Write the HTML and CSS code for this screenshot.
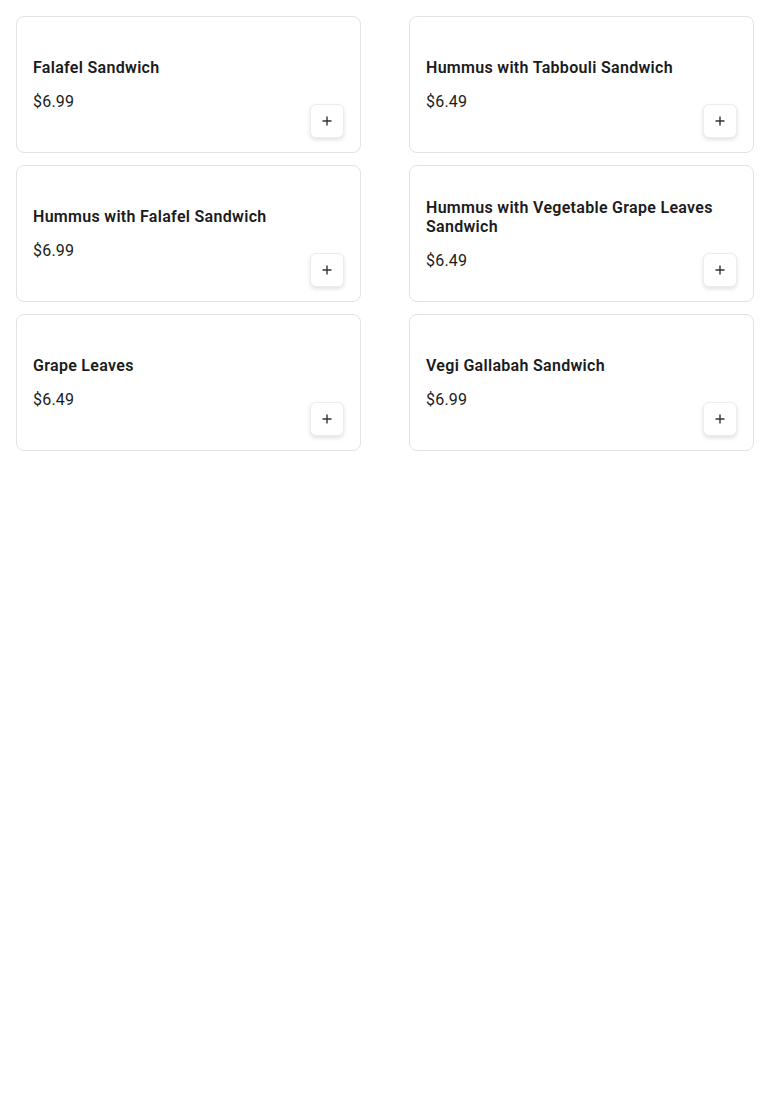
FILE: index.html
```html
<!DOCTYPE html>
<html>
<head>
<meta charset="utf-8">
<link rel="stylesheet" href="styles.css">
</head>
<body>
<div class="grid">
  <div class="card">
    <div class="info"><div class="title">Falafel Sandwich</div><div class="price">$6.99</div></div>
    <button class="add"><svg width="12" height="12" viewBox="0 0 12 12"><path d="M6 1.5v9M1.5 6h9" stroke="#333" stroke-width="1.4"/></svg></button>
  </div>
  <div class="card">
    <div class="info"><div class="title">Hummus with Tabbouli Sandwich</div><div class="price">$6.49</div></div>
    <button class="add"><svg width="12" height="12" viewBox="0 0 12 12"><path d="M6 1.5v9M1.5 6h9" stroke="#333" stroke-width="1.4"/></svg></button>
  </div>
  <div class="card">
    <div class="info"><div class="title">Hummus with Falafel Sandwich</div><div class="price">$6.99</div></div>
    <button class="add"><svg width="12" height="12" viewBox="0 0 12 12"><path d="M6 1.5v9M1.5 6h9" stroke="#333" stroke-width="1.4"/></svg></button>
  </div>
  <div class="card">
    <div class="info"><div class="title">Hummus with Vegetable Grape Leaves Sandwich</div><div class="price">$6.49</div></div>
    <button class="add"><svg width="12" height="12" viewBox="0 0 12 12"><path d="M6 1.5v9M1.5 6h9" stroke="#333" stroke-width="1.4"/></svg></button>
  </div>
  <div class="card">
    <div class="info"><div class="title">Grape Leaves</div><div class="price">$6.49</div></div>
    <button class="add"><svg width="12" height="12" viewBox="0 0 12 12"><path d="M6 1.5v9M1.5 6h9" stroke="#333" stroke-width="1.4"/></svg></button>
  </div>
  <div class="card">
    <div class="info"><div class="title">Vegi Gallabah Sandwich</div><div class="price">$6.99</div></div>
    <button class="add"><svg width="12" height="12" viewBox="0 0 12 12"><path d="M6 1.5v9M1.5 6h9" stroke="#333" stroke-width="1.4"/></svg></button>
  </div>
</div>
</body>
</html>
```
FILE: styles.css
```css
* { box-sizing: border-box; }
html, body { margin: 0; background: #fff; }
body { font-family: Roboto, "Liberation Sans", sans-serif; color: #1b1b1b; }
.grid {
  display: grid;
  grid-template-columns: 345px 345px;
  column-gap: 48px;
  row-gap: 12px;
  padding: 16px;
}
.card {
  position: relative;
  min-height: 137px;
  border: 1px solid #e3e3e3;
  border-radius: 8px;
  padding: 16px;
  display: flex;
  align-items: center;
}
.info { width: 100%; }
.title {
  font-size: 16px;
  font-weight: 600;
  line-height: 19px;
  letter-spacing: 0.3px;
  margin-bottom: 15px;
}
.price {
  font-size: 16px;
  line-height: 19px;
  font-weight: 400;
  letter-spacing: 0.2px;
}
.add {
  position: absolute;
  right: 16px;
  bottom: 14px;
  width: 34px;
  height: 34px;
  padding: 0;
  border: 1px solid #ececec;
  border-radius: 6px;
  background: #fff;
  box-shadow: 0 2px 4px rgba(0,0,0,0.12);
  display: flex;
  align-items: center;
  justify-content: center;
}
```
